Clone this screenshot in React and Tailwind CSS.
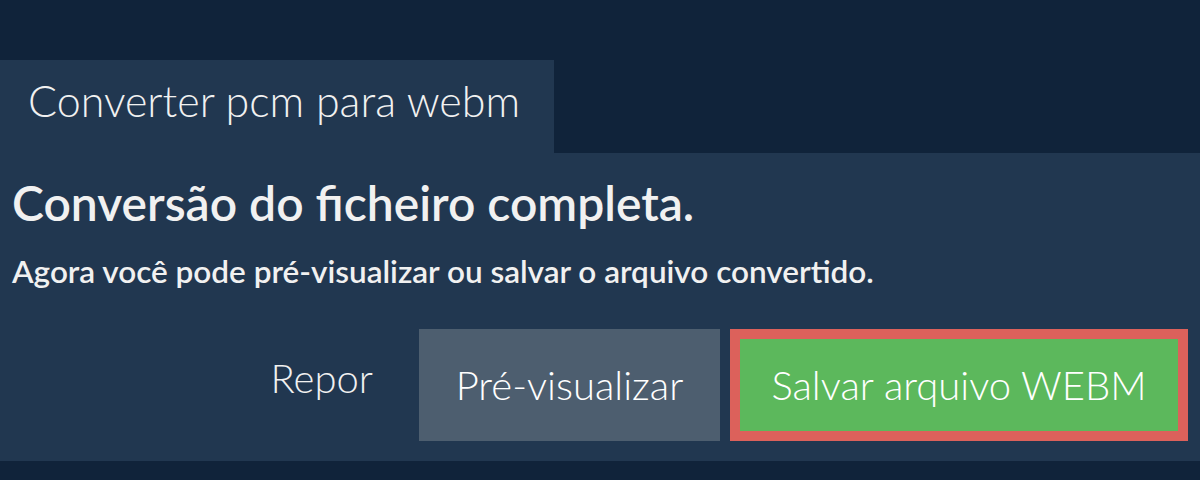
import React from 'react';

const App = () => {
  return (
    <div className="min-h-[480px] bg-[#10233a] pt-[60px] font-['Lato','Liberation_Sans',sans-serif] text-[#f1f1f1]">
      {/* Tab */}
      <div className="flex">
        <div className="w-[554px] h-[93px] bg-[#213750] pl-[28px] pt-[15px]">
          <h1 className="text-[43px] font-light leading-[52px]">Converter pcm para webm</h1>
        </div>
      </div>

      {/* Panel */}
      <div className="h-[308px] bg-[#213750] px-[12px] pt-[21px]">
        <h2 className="text-[48px] font-semibold leading-[58px]">Conversão do ficheiro completa.</h2>
        <p className="mt-[21px] text-[31.5px] font-semibold leading-[36px]">
          Agora você pode pré-visualizar ou salvar o arquivo convertido.
        </p>
        <div className="mt-[40px] flex items-center justify-end gap-[10px]">
          <button className="h-[112px] pl-[36px] pr-[36px] pb-[14px] text-[40px] font-light leading-[48px] text-[#f1f1f1]">
            Repor
          </button>
          <button className="h-[112px] w-[301px] bg-[#4d5e6f] text-[40px] font-light leading-[48px] text-white">
            Pré-visualizar
          </button>
          <button className="h-[112px] w-[458px] border-[10px] border-[#dc615b] bg-[#5cb85c] text-[40px] font-light leading-[48px] text-white">
            Salvar arquivo WEBM
          </button>
        </div>
      </div>
    </div>
  );
};

export default App;
